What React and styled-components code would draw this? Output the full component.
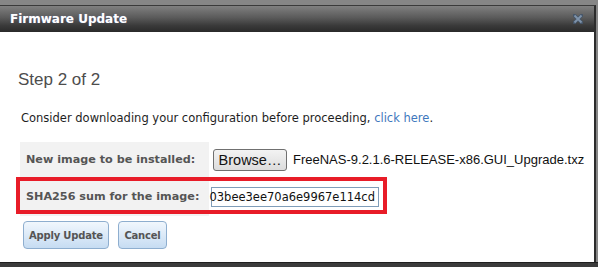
import React from 'react';
import styled, { createGlobalStyle } from 'styled-components';

const GlobalStyle = createGlobalStyle`
  html, body {
    margin: 0;
    padding: 0;
    background: #7c7c7c;
    overflow: hidden;
  }
`;

const Screen = styled.div`
  width: 598px;
  height: 267px;
  display: flex;
  flex-direction: column;
  padding-top: 5px;
  box-sizing: border-box;
  background: #868686;
`;

const Dialog = styled.div`
  width: 596px;
  height: 257px;
  box-sizing: border-box;
  display: flex;
  flex-direction: column;
  background: #fff;
  border-top: 1px solid #3a3a3a;
  border-right: 2px solid #2c2c2c;
`;

const TitleBar = styled.div`
  height: 26px;
  flex: none;
  display: flex;
  align-items: center;
  justify-content: space-between;
  padding: 0 11px 0 10px;
  background: linear-gradient(#808080 0%, #5a5a5a 45%, #3a3a3a 75%, #2a2a2a 100%);
`;

const Title = styled.span`
  font-family: "DejaVu Sans", Verdana, sans-serif;
  font-weight: bold;
  font-size: 12px;
  color: #fff;
  text-shadow: 0 0 1px rgba(150, 170, 255, 0.5);
`;

const CloseIcon = () => (
  <svg width="10" height="10" viewBox="0 0 10 10">
    <path d="M1.5 1.5 L8.5 8.5 M8.5 1.5 L1.5 8.5" stroke="#46566a" strokeWidth="3.4" strokeLinecap="square" />
    <path d="M1.5 1.5 L8.5 8.5 M8.5 1.5 L1.5 8.5" stroke="#7f93aa" strokeWidth="1.8" />
  </svg>
);

const Body = styled.div`
  flex: 1;
  padding: 38px 0 0 18px;
  font-family: "DejaVu Sans", Verdana, sans-serif;
  color: #222;
`;

const StepHeading = styled.div`
  font-family: "Liberation Sans", Arial, sans-serif;
  font-size: 17px;
  color: #4d4d4d;
  line-height: 20px;
`;

const Notice = styled.p`
  margin: 20px 0 0 3px;
  font-size: 11.5px;
  line-height: 16px;
  color: #1e1e1e;
`;

const InlineLink = styled.a`
  color: #3f78bd;
  text-decoration: none;
`;

const Form = styled.div`
  margin: 16px 0 0 2px;
  display: grid;
  grid-template-columns: 189px auto;
  justify-content: start;
`;

const Row = styled.div`
  display: contents;
`;

const Label = styled.div`
  background: #f2f2f2;
  height: ${p => p.$h}px;
  display: flex;
  align-items: center;
  padding-left: 6px;
  font-size: 11.2px;
  font-weight: bold;
  color: #555;
`;

const Value = styled.div`
  position: relative;
  display: flex;
  align-items: center;
  gap: 6px;
  padding-left: ${p => p.$pad}px;
`;

const Highlight = styled.div`
  position: absolute;
  left: -193px;
  top: 0;
  width: 371px;
  height: 37px;
  box-sizing: border-box;
  border: 4px solid #e81c28;
  pointer-events: none;
`;

const BrowseButton = styled.button`
  height: 22px;
  width: 74px;
  padding: 0;
  border: 1px solid #707070;
  border-radius: 3px;
  background: linear-gradient(#f3f3f3, #dcdcdc);
  font-family: "Liberation Sans", Arial, sans-serif;
  font-size: 14.5px;
  color: #111;
`;

const FileName = styled.span`
  font-family: "Liberation Sans", Arial, sans-serif;
  font-size: 13px;
  color: #111;
  white-space: nowrap;
`;

const HashField = styled.div`
  width: 168px;
  height: 20px;
  box-sizing: border-box;
  border: 1px solid #7f9db9;
  display: flex;
  justify-content: flex-end;
  align-items: center;
  padding-right: 3px;
  font-size: 11.5px;
  color: #111;
  white-space: nowrap;
`;

const Actions = styled.div`
  display: flex;
  gap: 9px;
  margin: 5px 0 0 5px;
`;

const ActionButton = styled.button`
  width: ${p => p.$w}px;
  height: 28px;
  padding: 0;
  border: 1px solid #8eaecf;
  border-radius: 4px;
  background: linear-gradient(#f1f7fd, #c6dcf2);
  font-family: "DejaVu Sans", Verdana, sans-serif;
  font-size: 10px;
  letter-spacing: -0.2px;
  font-weight: bold;
  color: #555;
`;

const Backdrop = styled.div`
  flex: 1;
  background: #3b3b3b;
  border-top: 1px solid #1f1f1f;
`;

export default function App() {
  return (
    <>
      <GlobalStyle />
      <Screen>
        <Dialog>
          <TitleBar>
            <Title>Firmware Update</Title>
            <CloseIcon />
          </TitleBar>
          <Body>
            <StepHeading>Step 2 of 2</StepHeading>
            <Notice>
              Consider downloading your configuration before proceeding,{' '}
              <InlineLink href="#">click here</InlineLink>.
            </Notice>
            <Form>
              <Row>
                <Label $h={35}>New image to be installed:</Label>
                <Value $pad={4}>
                  <BrowseButton type="button">Browse…</BrowseButton>
                  <FileName>FreeNAS-9.2.1.6-RELEASE-x86.GUI_Upgrade.txz</FileName>
                </Value>
              </Row>
              <Row>
                <Label $h={39}>SHA256 sum for the image:</Label>
                <Value $pad={2}>
                  <Highlight />
                  <HashField>03bee3ee70a6e9967e114cd</HashField>
                </Value>
              </Row>
            </Form>
            <Actions>
              <ActionButton type="button" $w={86}>Apply Update</ActionButton>
              <ActionButton type="button" $w={49}>Cancel</ActionButton>
            </Actions>
          </Body>
        </Dialog>
        <Backdrop />
      </Screen>
    </>
  );
}
